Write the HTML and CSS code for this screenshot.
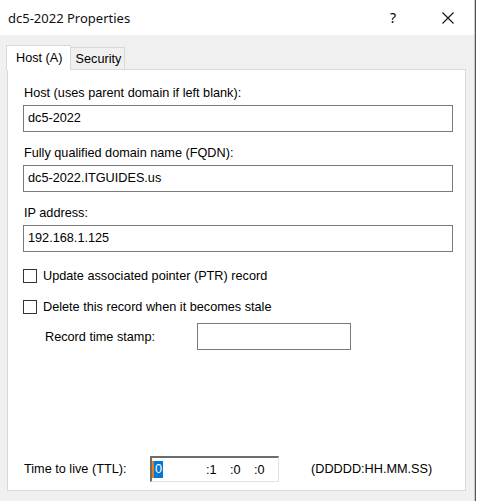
FILE: index.html
```html
<!DOCTYPE html>
<html lang="en">
<head>
  <meta charset="UTF-8" />
  <meta name="viewport" content="width=device-width, initial-scale=1.0" />
  <title>dc5-2022 Properties</title>
  <link rel="stylesheet" href="styles.css">
</head>
<body>
  <div class="dialog">
    <!-- Title bar -->
    <div class="titlebar">
      <span class="title">dc5-2022 Properties</span>
      <span class="help">?</span>
      <span class="close">
        <svg width="12" height="12" viewBox="0 0 12 12"><path d="M0.5 0.5 L11.5 11.5 M11.5 0.5 L0.5 11.5" stroke="#111" stroke-width="1.1" fill="none"/></svg>
      </span>
    </div>

    <!-- Tabs -->
    <div class="tabs">
      <div class="tab active">Host (A)</div>
      <div class="tab">Security</div>
      <div class="tab-fill"></div>
    </div>

    <div class="panel">
      <div class="field first">
        <div class="label">Host (uses parent domain if left blank):</div>
        <div class="textbox">dc5-2022</div>
      </div>
      <div class="field">
        <div class="label">Fully qualified domain name (FQDN):</div>
        <div class="textbox">dc5-2022.ITGUIDES.us</div>
      </div>
      <div class="field">
        <div class="label">IP address:</div>
        <div class="textbox">192.168.1.125</div>
      </div>

      <label class="check first-check"><span class="box"></span>Update associated pointer (PTR) record</label>
      <label class="check"><span class="box"></span>Delete this record when it becomes stale</label>

      <div class="stamp-row">
        <span class="stamp-label">Record time stamp:</span>
        <div class="stamp-box"></div>
      </div>

      <div class="spacer"></div>

      <div class="ttl-row">
        <span class="ttl-label">Time to live (TTL):</span>
        <div class="ttl-box">
          <span class="caret"></span><span class="sel">0</span>
          <span class="part p1">:1</span>
          <span class="part">:0</span>
          <span class="part">:0</span>
        </div>
        <span class="ttl-format">(DDDDD:HH.MM.SS)</span>
      </div>
    </div>
  </div>
  <div class="edge"></div>
</body>
</html>
```

FILE: styles.css
```css
body {
  margin: 0;
  display: flex;
  background-color: #fff;
  font-family: "Liberation Sans", Arial, sans-serif;
  font-size: 12.7px;
  color: #000;
}
.dialog {
  width: 474px;
  height: 501px;
  background-color: #f0f0f0;
  border-right: 1px solid #c8c8c8;
  display: flex;
  flex-direction: column;
}
.edge {
  width: 2px;
  border-left: 1px solid #555;
  background-color: #fff;
}
.titlebar {
  height: 35px;
  background-color: #fff;
  display: flex;
  align-items: center;
  flex-shrink: 0;
}
.title {
  font-family: "Noto Sans", sans-serif;
  font-size: 13px;
  padding-left: 8px;
  flex: 1;
  color: #111;
}
.help {
  font-family: "Noto Sans", sans-serif;
  font-size: 14px;
  width: 8px;
  margin-right: 44px;
}
.close {
  display: flex;
  margin-right: 20px;
}
.tabs {
  display: flex;
  align-items: flex-end;
  margin-top: 10px;
  padding-left: 6px;
  flex-shrink: 0;
}
.tab {
  height: 21px;
  line-height: 22px;
  padding: 0 3px 0 5px;
  border: 1px solid #d9d9d9;
  border-left: none;
  background-color: #f0f0f0;
}
.tab.active {
  height: 24px;
  line-height: 24px;
  padding: 0 7px 0 9px;
  border-left: 1px solid #d9d9d9;
  border-bottom: none;
  background-color: #fff;
}
.tab-fill {
  flex: 1;
  border-bottom: 1px solid #d9d9d9;
  margin-right: 8px;
}
.panel {
  flex: 1;
  margin: 0 8px 10px 7px;
  border: 1px solid #d9d9d9;
  border-top: none;
  background-color: #fff;
  padding: 0 12px 0 15px;
  display: flex;
  flex-direction: column;
}
.field {
  margin-top: 13px;
}
.field.first {
  margin-top: 15px;
}
.label {
  height: 16px;
  line-height: 16px;
  padding-left: 1px;
  margin-bottom: 4px;
}
.textbox {
  height: 25px;
  line-height: 25px;
  border: 1px solid #7a7a7a;
  padding-left: 4px;
}
.check {
  display: flex;
  align-items: center;
  height: 16px;
  margin-top: 15px;
}
.check.first-check {
  margin-top: 16px;
}
.box {
  width: 12px;
  height: 12px;
  border: 1px solid #333;
  background-color: #fff;
  margin-right: 6px;
}
.stamp-row {
  display: flex;
  align-items: center;
  margin-top: 8px;
  padding-left: 22px;
}
.stamp-label {
  width: 152px;
}
.stamp-box {
  width: 152px;
  height: 25px;
  border: 1px solid #7a7a7a;
}
.spacer {
  flex: 1;
}
.ttl-row {
  display: flex;
  align-items: center;
  padding-left: 1px;
  margin-bottom: 8px;
}
.ttl-label {
  width: 126px;
}
.ttl-box {
  width: 126px;
  height: 23px;
  border-top: 2px solid #6d6d6d;
  border-left: 2px solid #6d6d6d;
  border-right: 1px solid #e3e3e3;
  border-bottom: 1px solid #e3e3e3;
  display: flex;
  align-items: center;
}
.caret {
  width: 2px;
  height: 17px;
  background-color: #e87d1e;
}
.sel {
  background-color: #0078d7;
  color: #fff;
  height: 17px;
  line-height: 17px;
  padding: 0 1px;
}
.part {
  width: 25px;
}
.part.p1 {
  margin-left: 43px;
}
.ttl-format {
  margin-left: 32px;
}
```
